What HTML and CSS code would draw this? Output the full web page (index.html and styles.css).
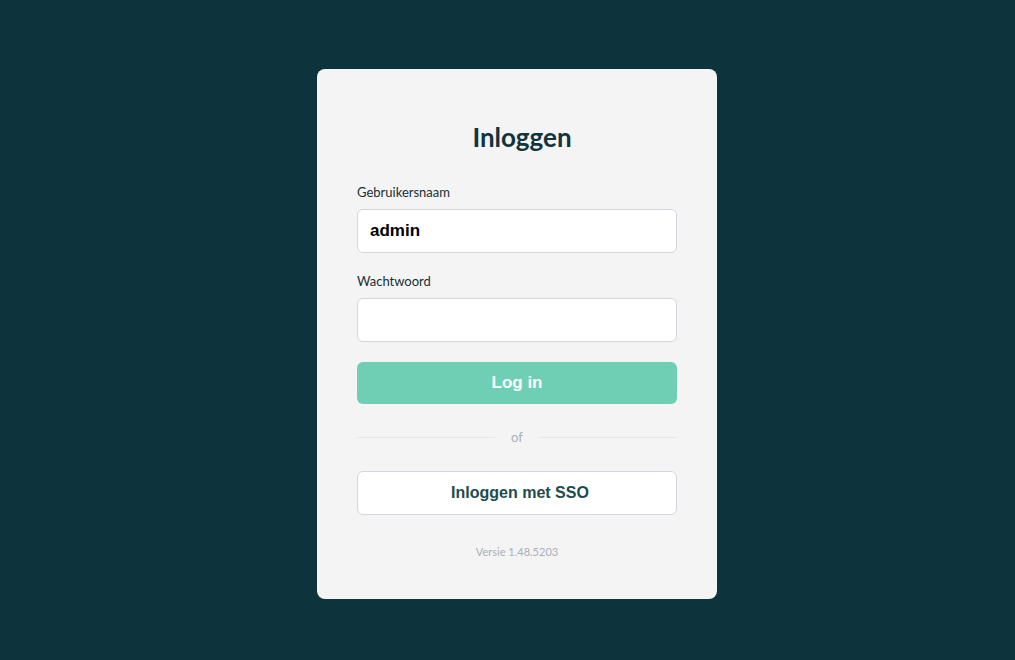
FILE: index.html
```html
<!DOCTYPE html>
<html lang="nl">
<head>
<meta charset="utf-8">
<title>Inloggen</title>
<link rel="stylesheet" href="styles.css">
</head>
<body>
<main class="page">
  <form class="card">
    <h1 class="title">Inloggen</h1>
    <div class="field">
      <label class="label" for="user">Gebruikersnaam</label>
      <input class="input" id="user" type="text" value="admin">
    </div>
    <div class="field">
      <label class="label" for="pass">Wachtwoord</label>
      <input class="input" id="pass" type="password">
    </div>
    <button class="btn-primary" type="button">Log in</button>
    <div class="divider"><span class="line"></span><span class="divider-text">of</span><span class="line"></span></div>
    <button class="btn-sso" type="button">Inloggen met SSO</button>
    <p class="version">Versie 1.48.5203</p>
  </form>
</main>
</body>
</html>
```
FILE: styles.css
```css
* { box-sizing: border-box; }
html, body { margin: 0; height: 100%; }
body {
  background: #0d333d;
  font-family: Lato, "Open Sans", sans-serif;
}
.page {
  display: flex;
  justify-content: center;
  align-items: flex-start;
  padding: 69px 0 0 19px;
  min-height: 100%;
}
.card {
  width: 400px;
  height: 530px;
  background: #f4f4f4;
  border-radius: 8px;
  padding: 52px 40px 40px;
  display: flex;
  flex-direction: column;
}
.title {
  margin: 0 0 30px;
  padding-left: 10px;
  text-align: center;
  font-size: 26px;
  line-height: 32px;
  font-weight: 700;
  color: #12343c;
}
.field {
  display: flex;
  flex-direction: column;
  gap: 8px;
  margin-bottom: 19px;
}
.field + .field { margin-bottom: 20px; }
.label {
  font-size: 13px;
  line-height: 18px;
  color: #1a2e35;
}
.input {
  height: 44px;
  border: 1px solid #d3d6dc;
  border-radius: 6px;
  background: #fff;
  padding: 0 12px;
  font-family: "Liberation Sans", Arial, sans-serif;
  font-size: 17px;
  font-weight: 700;
  color: #000;
  outline: none;
}
.btn-primary {
  height: 42px;
  border: 0;
  border-radius: 6px;
  background: #6fcfb4;
  color: #fff;
  font-family: "Liberation Sans", Arial, sans-serif;
  font-size: 17px;
  font-weight: 700;
}
.divider {
  display: flex;
  align-items: center;
  margin: 24px 0 25px;
  height: 18px;
}
.line {
  flex: 1;
  height: 1px;
  background: #e6e7e9;
}
.divider-text {
  padding: 0 16px;
  font-size: 13px;
  line-height: 18px;
  color: #a9afb8;
}
.btn-sso {
  height: 44px;
  border: 1px solid #d3d6dc;
  border-radius: 6px;
  background: #fff;
  padding: 0 0 0 6px;
  color: #1d4b50;
  font-family: "Liberation Sans", Arial, sans-serif;
  font-size: 16px;
  font-weight: 700;
}
.version {
  margin: 30px 0 0;
  text-align: center;
  font-size: 11px;
  line-height: 14px;
  color: #a9afb8;
}
```
